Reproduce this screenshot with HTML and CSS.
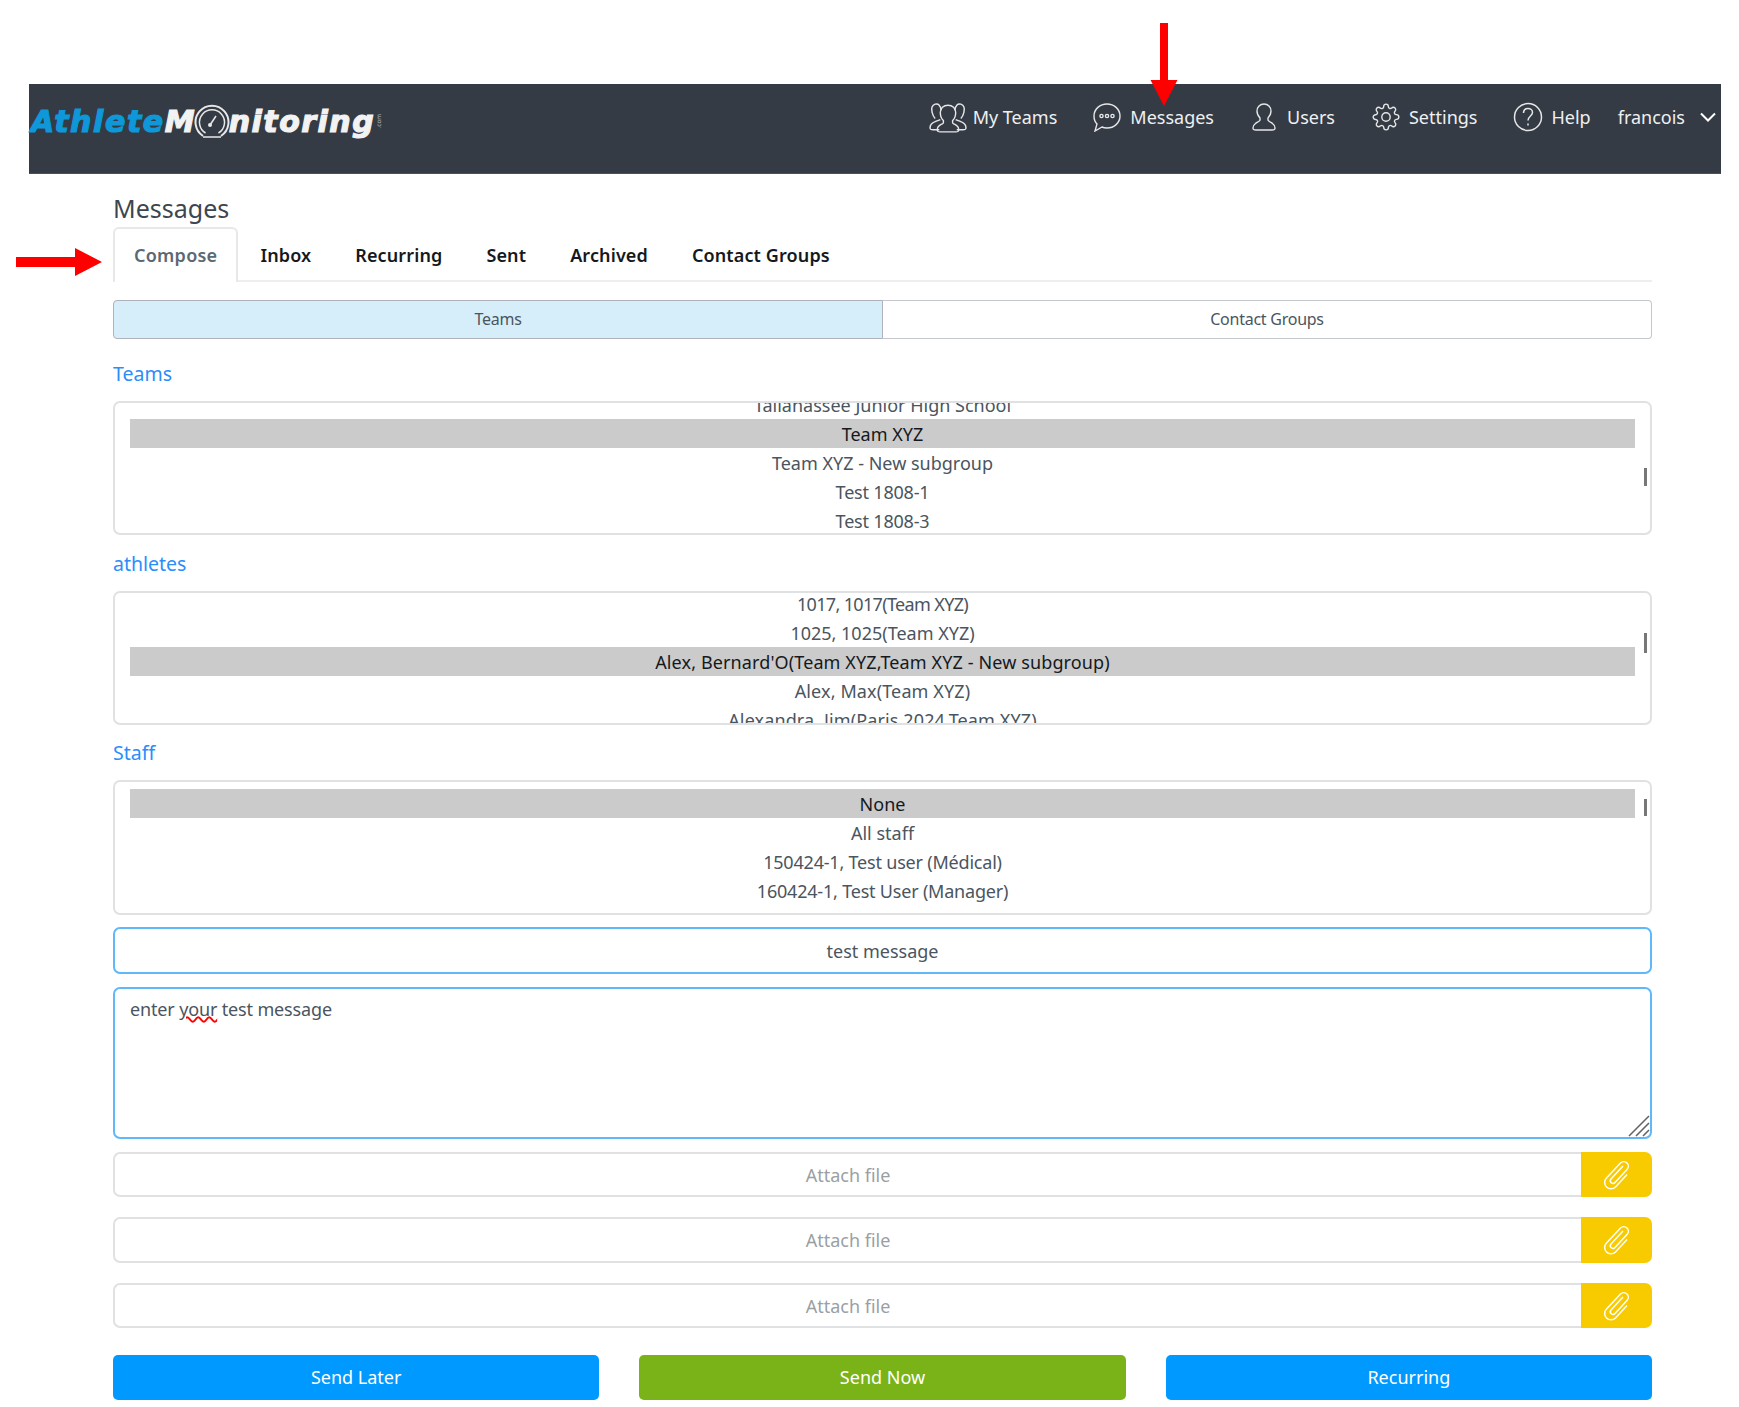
FILE: index.html
```html
<!DOCTYPE html>
<html lang="en">
<head>
<meta charset="utf-8">
<title>Messages</title>
<link rel="stylesheet" href="styles.css">
</head>
<body>
<svg class="arrow arrow-down" width="28" height="84" viewBox="0 0 28 84"><path d="M10 0h8v57h9.500L14 83 .5 57H10z" fill="#f00"/></svg>
<svg class="arrow arrow-right" width="87" height="28" viewBox="0 0 87 28"><path d="M0 9h59V0l27 14-27 14v-9H0z" fill="#f00"/></svg>
<div class="page">
  <header class="topbar">
    <div class="logo">
      <span class="logo-blue">Athlete</span><span class="logo-white logo-m">M</span>
      <svg class="gauge" width="36" height="37" viewBox="0 0 36 37" fill="none" stroke="#e8e8e8"><path d="M9 33A16.500 16.500 0 1 1 27 33" stroke-width="2"/><path d="M11.500 30A12.500 12.500 0 1 1 24.500 30" stroke-width="1.500"/><path d="M16 22l6-9" stroke-width="1.500"/><circle cx="16" cy="22" r="2" fill="#e8e8e8" stroke="none"/><path d="M9 34h18" stroke-width="1.500"/></svg>
      <span class="logo-white logo-rest">nitoring</span><span class="logo-com">.com</span>
    </div>
    <nav class="nav">
      <a class="nav-item nav-teams">
        <svg width="40" height="32" viewBox="0 0 39 31" fill="none" stroke="#e6e6e6" stroke-width="1.400"><path d="M12 18c-2 1-3 1-5 2-3 1-5 3-5 6 0 2 1 2 3 2h6"/><path d="M27 18c2 1 3 1 5 2 3 1 5 3 5 6 0 2-1 2-3 2h-6"/><path d="M13 9c-1-5-3-7-6-6C4 4 3 7 4 11c.5 2 1 4 3 6"/><path d="M26 9c1-5 3-7 6-6 3 1 4 4 3 8-.5 2-1 4-3 6"/><path d="M15 19c-2-2-3-5-3-8 0-4 3-7 7.500-7S27 7 27 11c0 3-1 6-3 8v2c0 1 3 2 4 3 1.500 1 2 2 2 4 0 2-1 2-3 2H12c-2 0-3 0-3-2 0-2 .5-3 2-4 1-1 4-2 4-3z"/></svg>
        <span>My Teams</span>
      </a>
      <a class="nav-item nav-messages">
        <svg width="28" height="30" viewBox="0 0 28 30" fill="none" stroke="#e6e6e6" stroke-width="1.400"><path d="M14 2c7 0 13 5 13 12s-6 12-13 12c-2 0-3 0-5-1l-7 4 2-7C2 20 1 17 1 14 1 7 7 2 14 2z"/><circle cx="8.500" cy="14" r="1.600"/><circle cx="14" cy="14" r="1.600"/><circle cx="19.500" cy="14" r="1.600"/></svg>
        <span>Messages</span>
      </a>
      <a class="nav-item nav-users">
        <svg width="24" height="28" viewBox="0 0 24 28" fill="none" stroke="#e6e6e6" stroke-width="1.400"><path d="M8 15c-2-2-3-4-3-7 0-4 3-7 7-7s7 3 7 7c0 3-1 5-3 7v2c0 1 2 2 4 3 2 1.500 3 3 3 5 0 2-1 2-3 2H4c-2 0-3 0-3-2 0-2 1-3.500 3-5 2-1 4-2 4-3z"/></svg>
        <span>Users</span>
      </a>
      <a class="nav-item nav-settings">
        <svg width="28" height="28" viewBox="0 0 24 24" fill="none" stroke="#e6e6e6" stroke-width="1.200"><circle cx="12" cy="12" r="3.600"/><path d="M19.400 15a1.650 1.650 0 0 0 .33 1.820l.06.06a2 2 0 0 1 0 2.830 2 2 0 0 1-2.830 0l-.06-.06a1.650 1.650 0 0 0-1.820-.33 1.650 1.650 0 0 0-1 1.510V21a2 2 0 0 1-2 2 2 2 0 0 1-2-2v-.09A1.650 1.650 0 0 0 9 19.400a1.650 1.650 0 0 0-1.820.33l-.06.06a2 2 0 0 1-2.830 0 2 2 0 0 1 0-2.830l.06-.06a1.650 1.650 0 0 0 .33-1.820 1.650 1.650 0 0 0-1.510-1H3a2 2 0 0 1-2-2 2 2 0 0 1 2-2h.09A1.650 1.650 0 0 0 4.600 9a1.650 1.650 0 0 0-.33-1.820l-.06-.06a2 2 0 0 1 0-2.830 2 2 0 0 1 2.830 0l.06.06a1.650 1.650 0 0 0 1.820.33H9a1.650 1.650 0 0 0 1-1.510V3a2 2 0 0 1 2-2 2 2 0 0 1 2 2v.09a1.650 1.650 0 0 0 1 1.510 1.650 1.650 0 0 0 1.820-.33l.06-.06a2 2 0 0 1 2.830 0 2 2 0 0 1 0 2.830l-.06.06a1.650 1.650 0 0 0-.33 1.820V9a1.650 1.650 0 0 0 1.510 1H21a2 2 0 0 1 2 2 2 2 0 0 1-2 2h-.09a1.650 1.650 0 0 0-1.510 1z"/></svg>
        <span>Settings</span>
      </a>
      <a class="nav-item nav-help">
        <svg width="30" height="30" viewBox="0 0 30 30" fill="none" stroke="#e6e6e6" stroke-width="1.500"><circle cx="15" cy="15" r="13.500"/><path d="M10.500 11c0-3 2-4.500 4.500-4.500s4.500 1.700 4.500 4c0 3.500-4.500 3.500-4.500 8"/><path d="M15 21.500v2"/></svg>
        <span>Help</span>
      </a>
      <a class="nav-item nav-user">
        <span>francois</span>
        <svg width="16" height="10" viewBox="0 0 16 10" fill="none" stroke="#fff" stroke-width="2"><path d="M1 1.500l7 7 7-7"/></svg>
      </a>
    </nav>
  </header>

  <main class="content">
    <h1 class="title">Messages</h1>
    <ul class="tabs">
      <li class="tab tab-active">Compose</li>
      <li class="tab">Inbox</li>
      <li class="tab">Recurring</li>
      <li class="tab">Sent</li>
      <li class="tab">Archived</li>
      <li class="tab">Contact Groups</li>
    </ul>

    <div class="segments">
      <div class="segment segment-on">Teams</div>
      <div class="segment">Contact Groups</div>
    </div>

    <div class="label label-first">Teams</div>
    <div class="listbox">
      <div class="rows rows-teams">
        <div class="row">Tallahassee Junior High School</div>
        <div class="row row-on">Team XYZ</div>
        <div class="row">Team XYZ - New subgroup</div>
        <div class="row row-digits">Test 1808-1</div>
        <div class="row row-digits">Test 1808-3</div>
      </div>
      <span class="thumb thumb-teams"></span>
    </div>

    <div class="label">athletes</div>
    <div class="listbox">
      <div class="rows rows-athletes">
        <div class="row row-ones">1017, 1017(Team XYZ)</div>
        <div class="row">1025, 1025(Team XYZ)</div>
        <div class="row row-on row-wide">Alex, Bernard'O(Team XYZ,Team XYZ - New subgroup)</div>
        <div class="row row-wide">Alex, Max(Team XYZ)</div>
        <div class="row row-wide">Alexandra, Jim(Paris 2024,Team XYZ)</div>
      </div>
      <span class="thumb thumb-athletes"></span>
    </div>

    <div class="label label-staff">Staff</div>
    <div class="listbox listbox-staff">
      <div class="rows rows-staff">
        <div class="row row-on">None</div>
        <div class="row">All staff</div>
        <div class="row row-digits">150424-1, Test user (Médical)</div>
        <div class="row row-digits">160424-1, Test User (Manager)</div>
      </div>
      <span class="thumb thumb-staff"></span>
    </div>

    <div class="subject">test message</div>
    <div class="message">
      <span>enter <span class="misspelt">your</span> test message</span>
      <svg class="grip" width="22" height="22" viewBox="0 0 22 22" stroke="#666" stroke-width="1.600"><path d="M1 21L21 1M8 21L21 8M15 21l6-6"/></svg>
    </div>

    <div class="attach">
      <div class="attach-name">Attach file</div>
      <div class="attach-btn"><svg width="30" height="32" viewBox="0 0 30 32" fill="none" stroke="#fff" stroke-width="1.500"><path d="M21 7L9 20a2.500 2.500 0 0 0 4 3.500L25 10.500a4.500 4.500 0 0 0-6.500-6.500L4.500 19a6.300 6.300 0 0 0 9 9L25 15.500"/></svg></div>
    </div>
    <div class="attach">
      <div class="attach-name">Attach file</div>
      <div class="attach-btn"><svg width="30" height="32" viewBox="0 0 30 32" fill="none" stroke="#fff" stroke-width="1.500"><path d="M21 7L9 20a2.500 2.500 0 0 0 4 3.500L25 10.500a4.500 4.500 0 0 0-6.500-6.500L4.500 19a6.300 6.300 0 0 0 9 9L25 15.500"/></svg></div>
    </div>
    <div class="attach">
      <div class="attach-name">Attach file</div>
      <div class="attach-btn"><svg width="30" height="32" viewBox="0 0 30 32" fill="none" stroke="#fff" stroke-width="1.500"><path d="M21 7L9 20a2.500 2.500 0 0 0 4 3.500L25 10.500a4.500 4.500 0 0 0-6.500-6.500L4.500 19a6.300 6.300 0 0 0 9 9L25 15.500"/></svg></div>
    </div>

    <div class="actions">
      <button class="action action-blue">Send Later</button>
      <button class="action action-green">Send Now</button>
      <button class="action action-blue">Recurring</button>
    </div>
  </main>
</div>
</body>
</html>
```
FILE: styles.css
```css
* { box-sizing: border-box; }
html, body { margin: 0; padding: 0; }
body {
  position: relative;
  background: #fff;
  color: #4a5560;
  font-family: "Noto Sans", "Open Sans", sans-serif;
  font-size: 18px;
  height: 1407px;
  overflow: hidden;
}
.arrow { position: absolute; z-index: 5; }
.arrow-down { left: 1150px; top: 23px; }
.arrow-right { left: 16px; top: 248px; }

.page { padding-top: 84px; }

.topbar {
  margin-left: 29px;
  width: 1692px;
  height: 90px;
  background: #343b45;
  border-bottom: 1px solid #48505a;
  display: flex;
  justify-content: space-between;
  align-items: flex-start;
}
.logo {
  display: flex;
  align-items: center;
  height: 36px;
  margin-top: 19px;
  padding-left: 2px;
  font-family: "DejaVu Sans", sans-serif;
  font-weight: 700;
  font-style: italic;
  font-size: 30px;
  -webkit-text-stroke: 1.2px currentColor;
}
.logo-blue { color: #0e97d9; letter-spacing: 1.6px; }
.logo-white { color: #f2f2f2; }
.logo-rest { letter-spacing: 1.5px; }
.gauge { margin: 0 -1px 0 -1px; }
.logo-com {
  color: #bbb;
  font-size: 6px;
  font-style: normal;
  font-weight: 400;
  -webkit-text-stroke: 0;
  writing-mode: vertical-rl;
  transform: rotate(180deg);
}
.nav { display: flex; align-items: center; height: 46px; margin-top: 10px; }
.nav-item { display: flex; align-items: center; color: #eef0f2; font-size: 18px; white-space: nowrap; }
.nav-teams svg { margin-right: 5px; }
.nav-messages { margin-left: 36px; }
.nav-messages svg { margin-right: 9px; }
.nav-users { margin-left: 38px; }
.nav-users svg { margin-right: 11px; }
.nav-settings { margin-left: 37px; }
.nav-settings svg { margin-right: 9px; }
.nav-help { margin-left: 36px; }
.nav-help svg { margin-right: 8px; }
.nav-user { margin-left: 27px; padding-right: 5px; }
.nav-user svg { margin-left: 15px; }

.content { margin-left: 113px; width: 1539px; }
.title {
  margin: 0;
  padding-top: 16px;
  height: 53px;
  font-size: 25px;
  line-height: 36px;
  font-weight: 400;
  color: #3c4651;
}
.tabs {
  display: flex;
  list-style: none;
  margin: 0;
  padding: 0;
  height: 55px;
  border-bottom: 2px solid #eceef0;
}
.tab {
  padding: 0 20px;
  line-height: 53px;
  font-weight: 600;
  letter-spacing: 0.12px;
  color: #15191d;
  border: 2px solid transparent;
  border-bottom: 0;
}
.tab-active {
  color: #5c6873;
  height: 55px;
  padding: 0 19px;
  letter-spacing: 0.25px;
  background: #fff;
  border-color: #e6e8ea;
  border-radius: 6px 6px 0 0;
}

.segments { display: flex; margin-top: 18px; height: 39px; }
.segment {
  flex: 1;
  border: 1.500px solid #c4c8cc;
  border-left-width: 0;
  text-align: center;
  font-size: 16px;
  letter-spacing: -0.25px;
  line-height: 36px;
  color: #4a5560;
  border-radius: 0 4px 4px 0;
}
.segment-on {
  background: #d6eefa;
  border-color: #adb3b8;
  border-left-width: 1.500px;
  border-radius: 4px 0 0 4px;
}

.label {
  margin-top: 14px;
  height: 30px;
  margin-bottom: 12px;
  font-size: 19.500px;
  line-height: 30px;
  color: #2a8dfb;
}
.label-first { margin-top: 20px; }
.label-staff { margin-top: 13px; }

.listbox {
  position: relative;
  height: 134px;
  border: 2px solid #dfe1e3;
  border-radius: 7px;
  overflow: hidden;
  text-align: center;
  padding: 0 15px;
}
.listbox-staff { height: 135px; }
.rows-teams { margin-top: -13px; }
.rows-athletes { margin-top: -4px; }
.rows-staff { margin-top: 7px; }
.row { height: 29px; line-height: 30px; }
.row-on { background: #cbcbcb; color: #15191d; }
.row-digits { letter-spacing: -0.2px; }
.row-ones { letter-spacing: -0.65px; }
.row-wide { letter-spacing: 0.12px; }
.thumb { position: absolute; left: 1529px; width: 3px; background: #777; }
.thumb-teams { top: 65px; height: 18px; }
.thumb-athletes { top: 40px; height: 20px; }
.thumb-staff { top: 17px; height: 17px; }

.subject {
  margin-top: 12px;
  height: 47px;
  border: 2px solid #5fb8fb;
  border-radius: 7px;
  text-align: center;
  line-height: 44px;
}
.message {
  position: relative;
  margin-top: 13px;
  height: 152px;
  border: 2px solid #5fb8fb;
  border-radius: 7px;
  padding: 6px 15px;
  line-height: 28px;
  letter-spacing: -0.15px;
}
.misspelt { text-decoration: underline wavy #f00 1.500px; text-underline-offset: 0; }
.grip { position: absolute; right: 0; bottom: 0; }

.attach { display: flex; height: 45px; margin-top: 13px; }
.attach + .attach { margin-top: 20px; height: 46px; }
.attach + .attach + .attach { height: 45px; }
.attach-name {
  flex: 1;
  border: 2px solid #dfe1e3;
  border-right: 0;
  border-radius: 7px 0 0 7px;
  text-align: center;
  line-height: 42px;
  color: #9a9fa4;
}
.attach-btn {
  width: 71px;
  background: #f8cb00;
  border-radius: 0 7px 7px 0;
  display: flex;
  align-items: center;
  justify-content: center;
}

.actions { display: flex; gap: 40px; margin-top: 27px; }
.action {
  flex: 1;
  height: 45px;
  border: 0;
  border-radius: 5px;
  color: #fff;
  font: inherit;
  line-height: 45px;
  padding: 0;
}
.action-blue { background: #0099ff; }
.action-green { background: #7ab317; }
```
